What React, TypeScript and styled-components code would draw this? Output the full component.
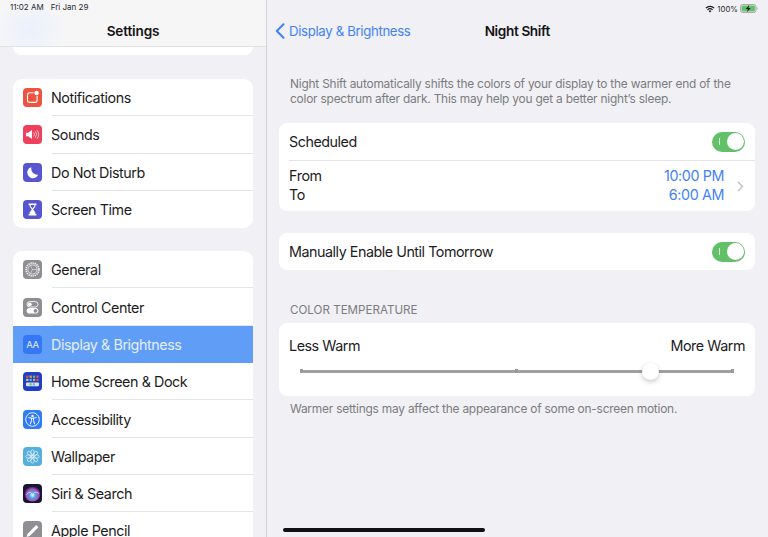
import React from 'react';
import styled, { createGlobalStyle } from 'styled-components';

const GlobalStyle = createGlobalStyle`
	html, body {
		margin: 0;
		padding: 0;
		background: #f0f0f5;
	}
	body {
		font-family: Inter, "Liberation Sans", sans-serif;
		color: #1c1c1e;
		-webkit-font-smoothing: antialiased;
	}
`;

const Screen = styled.div`
	width: 768px;
	height: 537px;
	display: flex;
	overflow: hidden;
	background: #f0f0f5;
	position: relative;
`;

const Sidebar = styled.aside`
	width: 266px;
	height: 537px;
	flex: none;
	overflow: hidden;
	border-right: 1px solid #d4d4d8;
	box-sizing: content-box;
`;

const SidebarHeader = styled.header`
	height: 47px;
	box-sizing: border-box;
	background:
		radial-gradient(circle at 30px 30px, #eaf0fb 0, rgba(234, 240, 251, 0) 36px),
		#f6f6f7;
	border-bottom: 1px solid #e2e2e5;
	display: flex;
	flex-direction: column;
`;

const StatusText = styled.div`
	height: 15px;
	padding: 1px 0 0 10px;
	display: flex;
	gap: 7px;
	font-size: 8px;
	line-height: 13px;
	color: #2a2a2c;
`;

const SidebarTitle = styled.div`
	text-align: center;
	font-size: 13.6px;
	line-height: 30px;
	font-weight: 600;
	letter-spacing: -0.15px;
	color: #141416;
`;

const SidebarBody = styled.div`
	padding: 0 13px;
	display: flex;
	flex-direction: column;
`;

const CardTail = styled.div`
	height: 8px;
	background: #fff;
	border-radius: 0 0 9px 9px;
	margin-bottom: 24px;
`;

const MenuCard = styled.div`
	background: #fff;
	border-radius: 9px;
	overflow: hidden;
	margin-bottom: 23px;
`;

const MenuRow = styled.div<{ $selected?: boolean }>`
	height: 37.3px;
	display: flex;
	align-items: center;
	padding-left: 10px;
	gap: 9px;
	font-size: 14.3px;
	letter-spacing: -0.42px;
	white-space: nowrap;
	background: ${p => (p.$selected ? '#5f9df7' : 'transparent')};
	color: ${p => (p.$selected ? '#e4eefd' : '#1c1c1e')};
	position: relative;
	&:not(:last-child)::after {
		content: '';
		display: ${p => (p.$selected ? 'none' : 'block')};
		position: absolute;
		left: 38.5px;
		right: 0;
		bottom: 0;
		height: 1px;
		background: #e4e4e7;
	}
`;

const IconTile = styled.span<{ $bg: string }>`
	width: 19px;
	height: 19px;
	flex: none;
	border-radius: 4px;
	background: ${p => p.$bg};
	display: block;
	overflow: hidden;
	svg {
		display: block;
	}
`;

const Detail = styled.main`
	flex: 1;
	min-width: 0;
	display: flex;
	flex-direction: column;
	padding: 0 13px 0 12px;
`;

const TopStatus = styled.div`
	height: 15px;
	display: flex;
	justify-content: flex-end;
	align-items: center;
	gap: 2px;
	font-size: 7.8px;
	color: #2a2a2c;
	margin-right: -3px;
	padding-top: 1px;
`;

const NavBar = styled.nav`
	height: 32px;
	padding-bottom: 2px;
	box-sizing: border-box;
	display: grid;
	grid-template-columns: 1fr auto 1fr;
	align-items: center;
	margin-left: -4.5px;
`;

const BackLink = styled.div`
	display: flex;
	align-items: center;
	gap: 4.5px;
	font-size: 13.2px;
	letter-spacing: -0.33px;
	color: #3f82f6;
`;

const NavTitle = styled.div`
	font-size: 13.6px;
	font-weight: 600;
	letter-spacing: -0.37px;
	color: #141416;
	margin-left: 5px;
`;

const Description = styled.p`
	margin: 29px 0 0;
	padding: 0 11px;
	font-size: 11.9px;
	line-height: 14.5px;
	letter-spacing: -0.21px;
	white-space: nowrap;
	color: #7c7c80;
`;

const Card = styled.section<{ $mt: number }>`
	margin-top: ${p => p.$mt}px;
	background: #fff;
	border-radius: 8px;
	overflow: hidden;
`;

const SwitchRow = styled.div`
	height: 37px;
	box-sizing: border-box;
	display: flex;
	align-items: center;
	justify-content: space-between;
	padding: 0 10px;
	font-size: 14.3px;
	letter-spacing: -0.46px;
`;

const Divider = styled.div`
	height: 1px;
	margin-left: 10px;
	background: #e4e4e7;
`;

const TimeRow = styled.div`
	height: 50px;
	box-sizing: border-box;
	display: flex;
	align-items: center;
	padding: 0 11px 2px 10px;
	font-size: 14.3px;
	line-height: 19.3px;
	letter-spacing: -0.38px;
	svg {
		margin-top: 2px;
	}
`;

const TimeLabels = styled.div`
	flex: 1;
`;

const TimeValues = styled.div`
	text-align: right;
	color: #3f82f6;
	margin-right: 13px;
`;

const Toggle = styled.span`
	width: 33px;
	height: 20px;
	border-radius: 10px;
	background: #62c068;
	position: relative;
	display: block;
	&::before {
		content: '';
		position: absolute;
		left: 7px;
		top: 6.5px;
		width: 1px;
		height: 7px;
		background: #d5f0d7;
	}
	&::after {
		content: '';
		position: absolute;
		right: 1.5px;
		top: 1.5px;
		width: 17px;
		height: 17px;
		border-radius: 50%;
		background: #fff;
	}
`;

const SectionLabel = styled.div`
	margin-top: 33px;
	padding: 0 11px;
	font-size: 11.6px;
	line-height: 14px;
	letter-spacing: 0;
	color: #7c7c80;
`;

const SliderCard = styled.section`
	margin-top: 6px;
	height: 73px;
	box-sizing: border-box;
	background: #fff;
	border-radius: 8px;
	padding: 13px 10px 0;
`;

const SliderLabels = styled.div`
	display: flex;
	justify-content: space-between;
	font-size: 14.3px;
	line-height: 20px;
	letter-spacing: -0.45px;
`;

const SliderTrack = styled.div`
	margin: 14px 12.5px 0 12px;
	height: 2.5px;
	background: #a0a0a2;
	position: relative;
`;

const SliderTick = styled.span<{ $left: string }>`
	position: absolute;
	left: ${p => p.$left};
	top: -0.75px;
	width: 3px;
	height: 4px;
	margin-left: -1.5px;
	background: #9a9a9c;
`;

const SliderThumb = styled.span`
	position: absolute;
	left: 81%;
	top: -7.5px;
	width: 17.5px;
	height: 17.5px;
	margin-left: -8.75px;
	border-radius: 50%;
	background: #fff;
	box-shadow: 0 2px 5px rgba(0, 0, 0, 0.22);
`;

const Footnote = styled.p`
	margin: 6px 0 0;
	padding: 0 11px;
	font-size: 11.9px;
	line-height: 14.5px;
	letter-spacing: -0.21px;
	white-space: nowrap;
	color: #7c7c80;
`;

const HomeIndicator = styled.div`
	position: absolute;
	left: 283px;
	bottom: 5px;
	width: 202px;
	height: 4px;
	border-radius: 2px;
	background: #101012;
`;

const Tile = ({ bg, children }: { bg: string; children: React.ReactNode }) => (
	<IconTile $bg={bg}>
		<svg width='19' height='19' viewBox='0 0 19 19'>
			{children}
		</svg>
	</IconTile>
);

const NotificationsIcon = () => (
	<Tile bg='#ee5340'>
		<rect x='4.5' y='4.8' width='9.6' height='9.6' rx='2.2' fill='none' stroke='#fff' strokeWidth='1.1' />
		<circle cx='13.6' cy='5' r='3' fill='#ee5340' />
		<circle cx='13.6' cy='5' r='2.2' fill='#fff' />
	</Tile>
);

const SoundsIcon = () => (
	<Tile bg='#ee3f5d'>
		<path d='M3 7.7h2.2L9 5v9L5.2 11.3H3z' fill='#fff' />
		<path d='M10.6 7.6a3 3 0 0 1 0 3.8M12.3 6.3a5 5 0 0 1 0 6.4M14 5.2a7 7 0 0 1 0 8.6' fill='none' stroke='#fff' strokeWidth='0.7' />
	</Tile>
);

const MoonIcon = () => (
	<Tile bg='#5856cf'>
		<path d='M8.4 4.2a5.6 5.6 0 1 0 6.7 7.5A6.2 6.2 0 0 1 8.4 4.2z' fill='#fff' />
	</Tile>
);

const HourglassIcon = () => (
	<Tile bg='#5856cf'>
		<path d='M5.6 3.6h7.8v1.5h-1v1.5L10.2 9.5l2.2 2.9v1.5h1v1.5H5.6v-1.5h1v-1.5l2.2-2.9L6.6 6.6V5.1h-1z' fill='#fff' />
		<path d='M7.8 5.1h3.4v1.1L9.5 8.4 7.8 6.2z' fill='#5856cf' />
	</Tile>
);

const GeneralIcon = () => (
	<Tile bg='#8e8e93'>
		<circle cx='9.5' cy='9.5' r='6.4' fill='none' stroke='#f2f2f2' strokeWidth='1.7' strokeDasharray='1.3 0.8' />
		<circle cx='9.5' cy='9.5' r='4.6' fill='none' stroke='#f2f2f2' strokeWidth='0.8' />
		<path d='M9.5 9.5L7.6 5.8M9.5 9.5H13.8M9.5 9.5L7.6 13.2' stroke='#eee' strokeWidth='0.6' />
	</Tile>
);

const ControlCenterIcon = () => (
	<Tile bg='#8e8e93'>
		<rect x='4' y='3.6' width='11' height='5.4' rx='2.7' fill='none' stroke='#fff' strokeWidth='0.9' />
		<circle cx='6.8' cy='6.3' r='1.9' fill='#fff' />
		<rect x='3.6' y='10' width='11.8' height='5.6' rx='2.8' fill='#fff' />
		<circle cx='12.5' cy='12.8' r='1.9' fill='#8e8e93' />
	</Tile>
);

const DisplayIcon = () => (
	<Tile bg='#3478f6'>
		<text x='9.5' y='13' textAnchor='middle' fontFamily='Inter, sans-serif' fontSize='9.5' fill='#e4eefd'>
			AA
		</text>
	</Tile>
);

const HOME_DOTS = ['#e8574b', '#f2a23c', '#5ec26a', '#e8574b', '#f2c94c', '#62b4ef', '#f2a23c', '#e8574b'];

const HomeScreenIcon = () => (
	<Tile bg='#1f3fc4'>
		{HOME_DOTS.map((color, i) => (
			<rect key={i} x={3.2 + (i % 4) * 3.4} y={3.6 + Math.floor(i / 4) * 3.2} width='2.2' height='2.2' fill={color} />
		))}
		<rect x='3' y='10.6' width='13' height='3.6' rx='1' fill='#dfe5f8' />
		<rect x='6.4' y='11.3' width='2.2' height='2.2' fill='#5ec26a' />
		<rect x='9.8' y='11.3' width='2.2' height='2.2' fill='#62b4ef' />
	</Tile>
);

const AccessibilityIcon = () => (
	<Tile bg='#2f7bf6'>
		<circle cx='9.5' cy='9.5' r='6.8' fill='none' stroke='#fff' strokeWidth='0.9' />
		<circle cx='9.5' cy='5.9' r='1.2' fill='#fff' />
		<path d='M5.8 7.6l2.7.6v2.4l-1.1 3.4M13.2 7.6l-2.7.6v2.4l1.1 3.4M8.5 8.2h2' fill='none' stroke='#fff' strokeWidth='1' strokeLinecap='round' />
	</Tile>
);

const WallpaperIcon = () => (
	<Tile bg='#55aede'>
		{[0, 45, 90, 135, 180, 225, 270, 315].map(a => (
			<ellipse key={a} cx='9.5' cy='5.7' rx='1.7' ry='2.9' fill='none' stroke='#fff' strokeWidth='0.6' transform={`rotate(${a} 9.5 9.5)`} />
		))}
	</Tile>
);

const SiriIcon = () => (
	<Tile bg='#16162e'>
		<defs>
			<radialGradient id='siriGlow' cx='50%' cy='60%' r='55%'>
				<stop offset='0' stopColor='#dff6ff' />
				<stop offset='0.35' stopColor='#4aa8dc' />
				<stop offset='0.7' stopColor='#b049c4' />
				<stop offset='1' stopColor='#16162e' />
			</radialGradient>
		</defs>
		<circle cx='9.5' cy='9.5' r='8' fill='url(#siriGlow)' />
		<path d='M3.5 10.5Q8 5 9.6 12.5Q11 5.5 15.8 9.5' fill='none' stroke='#e9e2ff' strokeWidth='0.8' />
	</Tile>
);

const PencilIcon = () => (
	<Tile bg='#8e8e93'>
		<path d='M3.6 16l1-3.3 8.6-8.6 2.2 2.2-8.6 8.6z' fill='#fff' />
	</Tile>
);

const WifiIcon = () => (
	<svg width='10' height='8' viewBox='0 0 10 8'>
		<path d='M.4 2.7a6.6 6.6 0 0 1 9.2 0l-.9.9a5.3 5.3 0 0 0-7.4 0zM2 4.4a4.3 4.3 0 0 1 6 0l-.9.9a3 3 0 0 0-4.2 0zM3.6 6a2 2 0 0 1 2.8 0L5 7.5z' fill='#1c1c1e' />
	</svg>
);

const BatteryIcon = () => (
	<svg width='18' height='9' viewBox='0 0 18 9'>
		<rect x='.5' y='.5' width='15.4' height='8' rx='2' fill='none' stroke='#a9a9ac' />
		<rect x='1.5' y='1.5' width='13.4' height='6' rx='1' fill='#62c068' />
		<path d='M16.6 3v3c.7-.2 1-.8 1-1.5s-.3-1.3-1-1.5z' fill='#a9a9ac' />
		<path d='M9.4 .8L5.7 5h2.2l-1 3.2L10.6 4H8.4z' fill='#1c1c1e' />
	</svg>
);

const firstGroup = [
	{ label: 'Notifications', icon: <NotificationsIcon /> },
	{ label: 'Sounds', icon: <SoundsIcon /> },
	{ label: 'Do Not Disturb', icon: <MoonIcon /> },
	{ label: 'Screen Time', icon: <HourglassIcon /> }
];

const secondGroup = [
	{ label: 'General', icon: <GeneralIcon /> },
	{ label: 'Control Center', icon: <ControlCenterIcon /> },
	{ label: 'Display & Brightness', icon: <DisplayIcon />, selected: true },
	{ label: 'Home Screen & Dock', icon: <HomeScreenIcon /> },
	{ label: 'Accessibility', icon: <AccessibilityIcon /> },
	{ label: 'Wallpaper', icon: <WallpaperIcon /> },
	{ label: 'Siri & Search', icon: <SiriIcon /> },
	{ label: 'Apple Pencil', icon: <PencilIcon /> }
];

const App = () => (
	<Screen>
		<GlobalStyle />
		<Sidebar>
			<SidebarHeader>
				<StatusText>
					<span>11:02 AM</span>
					<span>Fri Jan 29</span>
				</StatusText>
				<SidebarTitle>Settings</SidebarTitle>
			</SidebarHeader>
			<SidebarBody>
				<CardTail />
				<MenuCard>
					{firstGroup.map(item => (
						<MenuRow key={item.label}>
							{item.icon}
							{item.label}
						</MenuRow>
					))}
				</MenuCard>
				<MenuCard>
					{secondGroup.map(item => (
						<MenuRow key={item.label} $selected={item.selected}>
							{item.icon}
							{item.label}
						</MenuRow>
					))}
				</MenuCard>
			</SidebarBody>
		</Sidebar>
		<Detail>
			<TopStatus>
				<WifiIcon />
				<span>100%</span>
				<BatteryIcon />
			</TopStatus>
			<NavBar>
				<BackLink>
					<svg width='10' height='16' viewBox='0 0 10 16'>
						<path d='M8.5 1.2L1.8 8l6.7 6.8' fill='none' stroke='#3f82f6' strokeWidth='2' strokeLinecap='round' strokeLinejoin='round' />
					</svg>
					Display &amp; Brightness
				</BackLink>
				<NavTitle>Night Shift</NavTitle>
				<span />
			</NavBar>
			<Description>
				Night Shift automatically shifts the colors of your display to the warmer end of the
				<br />
				color spectrum after dark. This may help you get a better night’s sleep.
			</Description>
			<Card $mt={17}>
				<SwitchRow>
					Scheduled
					<Toggle />
				</SwitchRow>
				<Divider />
				<TimeRow>
					<TimeLabels>
						<div>From</div>
						<div>To</div>
					</TimeLabels>
					<TimeValues>
						<div>10:00 PM</div>
						<div>6:00 AM</div>
					</TimeValues>
					<svg width='7' height='11' viewBox='0 0 7 11'>
						<path d='M1 1l4.5 4.5L1 10' fill='none' stroke='#c4c4c7' strokeWidth='1.5' />
					</svg>
				</TimeRow>
			</Card>
			<Card $mt={22}>
				<SwitchRow>
					Manually Enable Until Tomorrow
					<Toggle />
				</SwitchRow>
			</Card>
			<SectionLabel>COLOR TEMPERATURE</SectionLabel>
			<SliderCard>
				<SliderLabels>
					<span>Less Warm</span>
					<span>More Warm</span>
				</SliderLabels>
				<SliderTrack>
					<SliderTick $left='0%' />
					<SliderTick $left='50%' />
					<SliderTick $left='100%' />
					<SliderThumb />
				</SliderTrack>
			</SliderCard>
			<Footnote>Warmer settings may affect the appearance of some on-screen motion.</Footnote>
		</Detail>
		<HomeIndicator />
	</Screen>
);

export default App;
